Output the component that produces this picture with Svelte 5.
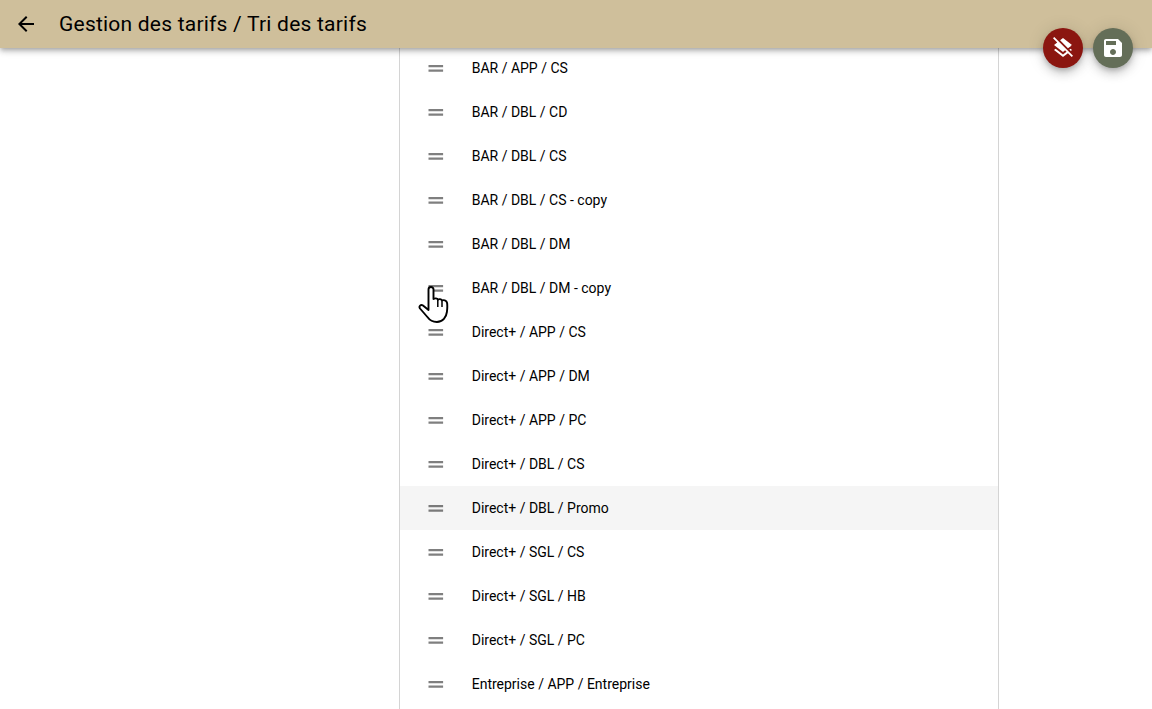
<script>
  const rows = [
    'BAR / APP / CS',
    'BAR / DBL / CD',
    'BAR / DBL / CS',
    'BAR / DBL / CS - copy',
    'BAR / DBL / DM',
    'BAR / DBL / DM - copy',
    'Direct+ / APP / CS',
    'Direct+ / APP / DM',
    'Direct+ / APP / PC',
    'Direct+ / DBL / CS',
    'Direct+ / DBL / Promo',
    'Direct+ / SGL / CS',
    'Direct+ / SGL / HB',
    'Direct+ / SGL / PC',
    'Entreprise / APP / Entreprise'
  ];
  const hovered = 'Direct+ / DBL / Promo';
</script>

<div class="page">
  <header class="bar">
    <button class="back" aria-label="Retour">
      <svg viewBox="0 0 24 24" width="24" height="24"><path d="M20 11H7.83l5.59-5.59L12 4l-8 8 8 8 1.41-1.41L7.83 13H20v-2z" /></svg>
    </button>
    <h1>Gestion des tarifs / Tri des tarifs</h1>
  </header>

  <div class="fabs">
    <button class="fab red" aria-label="Annuler">
      <svg viewBox="0 0 24 24" width="24" height="24"><path d="M19.81 14.99l1.19-.92-1.43-1.43-1.19.92 1.43 1.43zm-.45-5.25L21 9l-9-7-2.91 2.27 7.87 7.88 3.4-2.41zM3.27 1L2 2.27l4.22 4.22L3 9l1.63 1.27L12 16l2.1-1.63 1.43 1.43L12 18.54l-7.37-5.73L3 14.07l9 7 4.95-3.85L20.73 21 22 19.73 3.27 1z" /></svg>
    </button>
    <button class="fab green" aria-label="Enregistrer">
      <svg viewBox="0 0 24 24" width="24" height="24"><path d="M17 3H5c-1.11 0-2 .9-2 2v14c0 1.1.89 2 2 2h14c1.1 0 2-.9 2-2V7l-4-4zm-5 16c-1.66 0-3-1.34-3-3s1.34-3 3-3 3 1.34 3 3-1.34 3-3 3zm3-10H5V5h10v4z" /></svg>
    </button>
  </div>

  <ul class="list">
    {#each rows as row}
      <li class:hover={row === hovered}>
        <svg class="handle" viewBox="0 0 24 24" width="24" height="24"><path d="M4.500 9h14.600v2.200H4.500zM4.500 13.500h14.600v2.200H4.500z" /></svg>
        <span>{row}</span>
      </li>
    {/each}
  </ul>

  <svg class="cursor" viewBox="0 0 32 40" width="32" height="40">
    <path d="M10.500 23V5.500a2.500 2.500 0 0 1 5 0V15c1.500-1 3.600-.8 4.400.6 1.200-.8 3.200-.6 4 .8 1.400-.6 4.800-.2 5.200 2.600.4 3 .2 6-.2 9-.6 5-4 10-10 10-4.500 0-7-1.500-9.500-5L2 24.500c-1.500-2.300.8-4.500 3-3l5.500 4.500z" fill="#fff" stroke="#000" stroke-width="1.900" stroke-linejoin="round" />
    <path d="M19.800 16v7M24 17v6" fill="none" stroke="#000" stroke-width="1.500" />
  </svg>
</div>

<style>
  :global(body) {
    margin: 0;
    background: #fff;
    font-family: Roboto, "Liberation Sans", sans-serif;
  }
  .page {
    position: relative;
    display: flex;
    flex-direction: column;
    height: 709px;
    overflow: hidden;
    background: #fff;
  }
  .bar {
    position: relative;
    z-index: 2;
    flex: none;
    display: flex;
    align-items: center;
    height: 48px;
    padding-left: 14px;
    box-sizing: border-box;
    background: #cfbf9b;
    box-shadow: 0 2px 4px -1px rgba(0, 0, 0, .2), 0 4px 5px 0 rgba(0, 0, 0, .14), 0 1px 10px 0 rgba(0, 0, 0, .12);
  }
  .back {
    display: flex;
    width: 24px;
    height: 24px;
    padding: 0;
    border: 0;
    background: none;
  }
  h1 {
    margin: 0 0 0 21px;
    font-size: 21px;
    font-weight: 400;
    letter-spacing: .22px;
    color: #000;
  }
  .fabs {
    position: absolute;
    z-index: 3;
    top: 28px;
    right: 19px;
    display: flex;
    gap: 10px;
  }
  .fab {
    display: flex;
    align-items: center;
    justify-content: center;
    width: 40px;
    height: 40px;
    padding: 0;
    border: 0;
    border-radius: 50%;
    box-shadow: 0 3px 5px -1px rgba(0, 0, 0, .2), 0 6px 10px 0 rgba(0, 0, 0, .14), 0 1px 18px 0 rgba(0, 0, 0, .12);
  }
  .fab svg { fill: #fff; }
  .red { background: #8b1610; }
  .green { background: #646e58; }
  .list {
    flex: 1;
    width: 600px;
    box-sizing: border-box;
    margin: -2px 0 0 399px;
    padding: 0;
    list-style: none;
    border-left: 1px solid #d4d4d4;
    border-right: 1px solid #d4d4d4;
  }
  li {
    display: flex;
    align-items: center;
    height: 44px;
    padding-left: 23.700px;
    font-size: 14px;
    color: #000;
  }
  li.hover { background: #f5f5f5; }
  .handle {
    margin-right: 24px;
    fill: rgba(0, 0, 0, .5);
  }
  .cursor {
    position: absolute;
    z-index: 1;
    left: 418px;
    top: 284px;
  }
</style>
